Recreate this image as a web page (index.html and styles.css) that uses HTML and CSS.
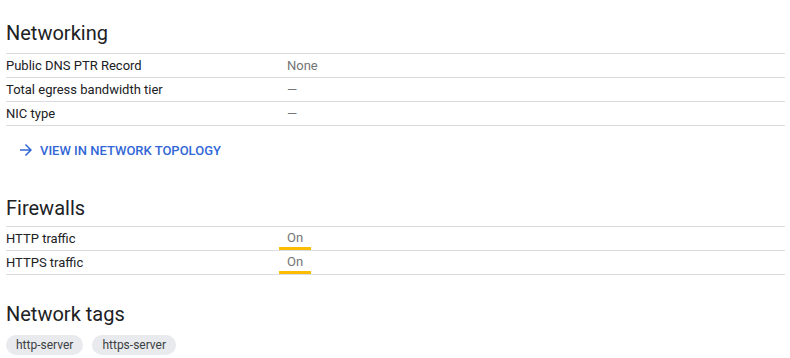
FILE: index.html
```html
<!DOCTYPE html>
<html>
<head>
<meta charset="utf-8">
<link rel="stylesheet" href="styles.css">
</head>
<body>
<div class="page">
  <section class="section">
    <h2 class="title">Networking</h2>
    <div class="table">
      <div class="row"><div class="key">Public DNS PTR Record</div><div class="val">None</div></div>
      <div class="row"><div class="key">Total egress bandwidth tier</div><div class="val">—</div></div>
      <div class="row"><div class="key">NIC type</div><div class="val">—</div></div>
    </div>
    <a class="link" href="#">
      <svg class="arrow" width="18" height="18" viewBox="0 0 24 24"><path d="M12 4l-1.41 1.41L16.17 11H4v2h12.17l-5.58 5.59L12 20l8-8z" fill="currentColor"/></svg>
      <span>VIEW IN NETWORK TOPOLOGY</span>
    </a>
  </section>
  <section class="section fw">
    <h2 class="title">Firewalls</h2>
    <div class="table">
      <div class="row"><div class="key">HTTP traffic</div><div class="val"><span class="flag">On</span></div></div>
      <div class="row"><div class="key">HTTPS traffic</div><div class="val"><span class="flag">On</span></div></div>
    </div>
  </section>
  <section class="section tags-sec">
    <h2 class="title">Network tags</h2>
    <div class="chips">
      <span class="chip">http-server</span>
      <span class="chip">https-server</span>
    </div>
  </section>
</div>
</body>
</html>
```

FILE: styles.css
```css
html, body { margin: 0; padding: 0; background: #fff; }
body { font-family: Roboto, "Noto Sans", Arial, sans-serif; color: #202124; }
.page { padding: 21px 5px 0 6px; }
.title { font-size: 20px; font-weight: 400; line-height: 24px; margin: 0 0 8px; color: #202124; }
.table { border-top: 1px solid #dadce0; }
.row { display: flex; height: 23px; border-bottom: 1px solid #dadce0; font-size: 13px; align-items: stretch; }
.key { width: 281px; display: flex; align-items: center; color: #202124; }
.val { display: flex; align-items: center; color: #757575; }
.flag { display: flex; align-items: center; height: 23px; box-sizing: border-box; padding: 0 8px; margin-left: -8px; border-bottom: 3px solid #fbbc04; }
.link { display: flex; align-items: center; height: 24px; margin: 12px 0 0 11px; color: #3367d6; text-decoration: none; font-size: 13px; font-weight: 500; }
.arrow { margin-right: 5px; }
.fw { margin-top: 34px; }
.fw .title { margin-bottom: 6px; }
.tags-sec { margin-top: 27px; }
.tags-sec .title { margin-bottom: 9px; }
.chips { display: flex; gap: 9px; }
.chip { height: 20px; line-height: 20px; padding: 0 10px; border-radius: 10px; background: #e8eaed; color: #3c4043; font-size: 12px; }
```
